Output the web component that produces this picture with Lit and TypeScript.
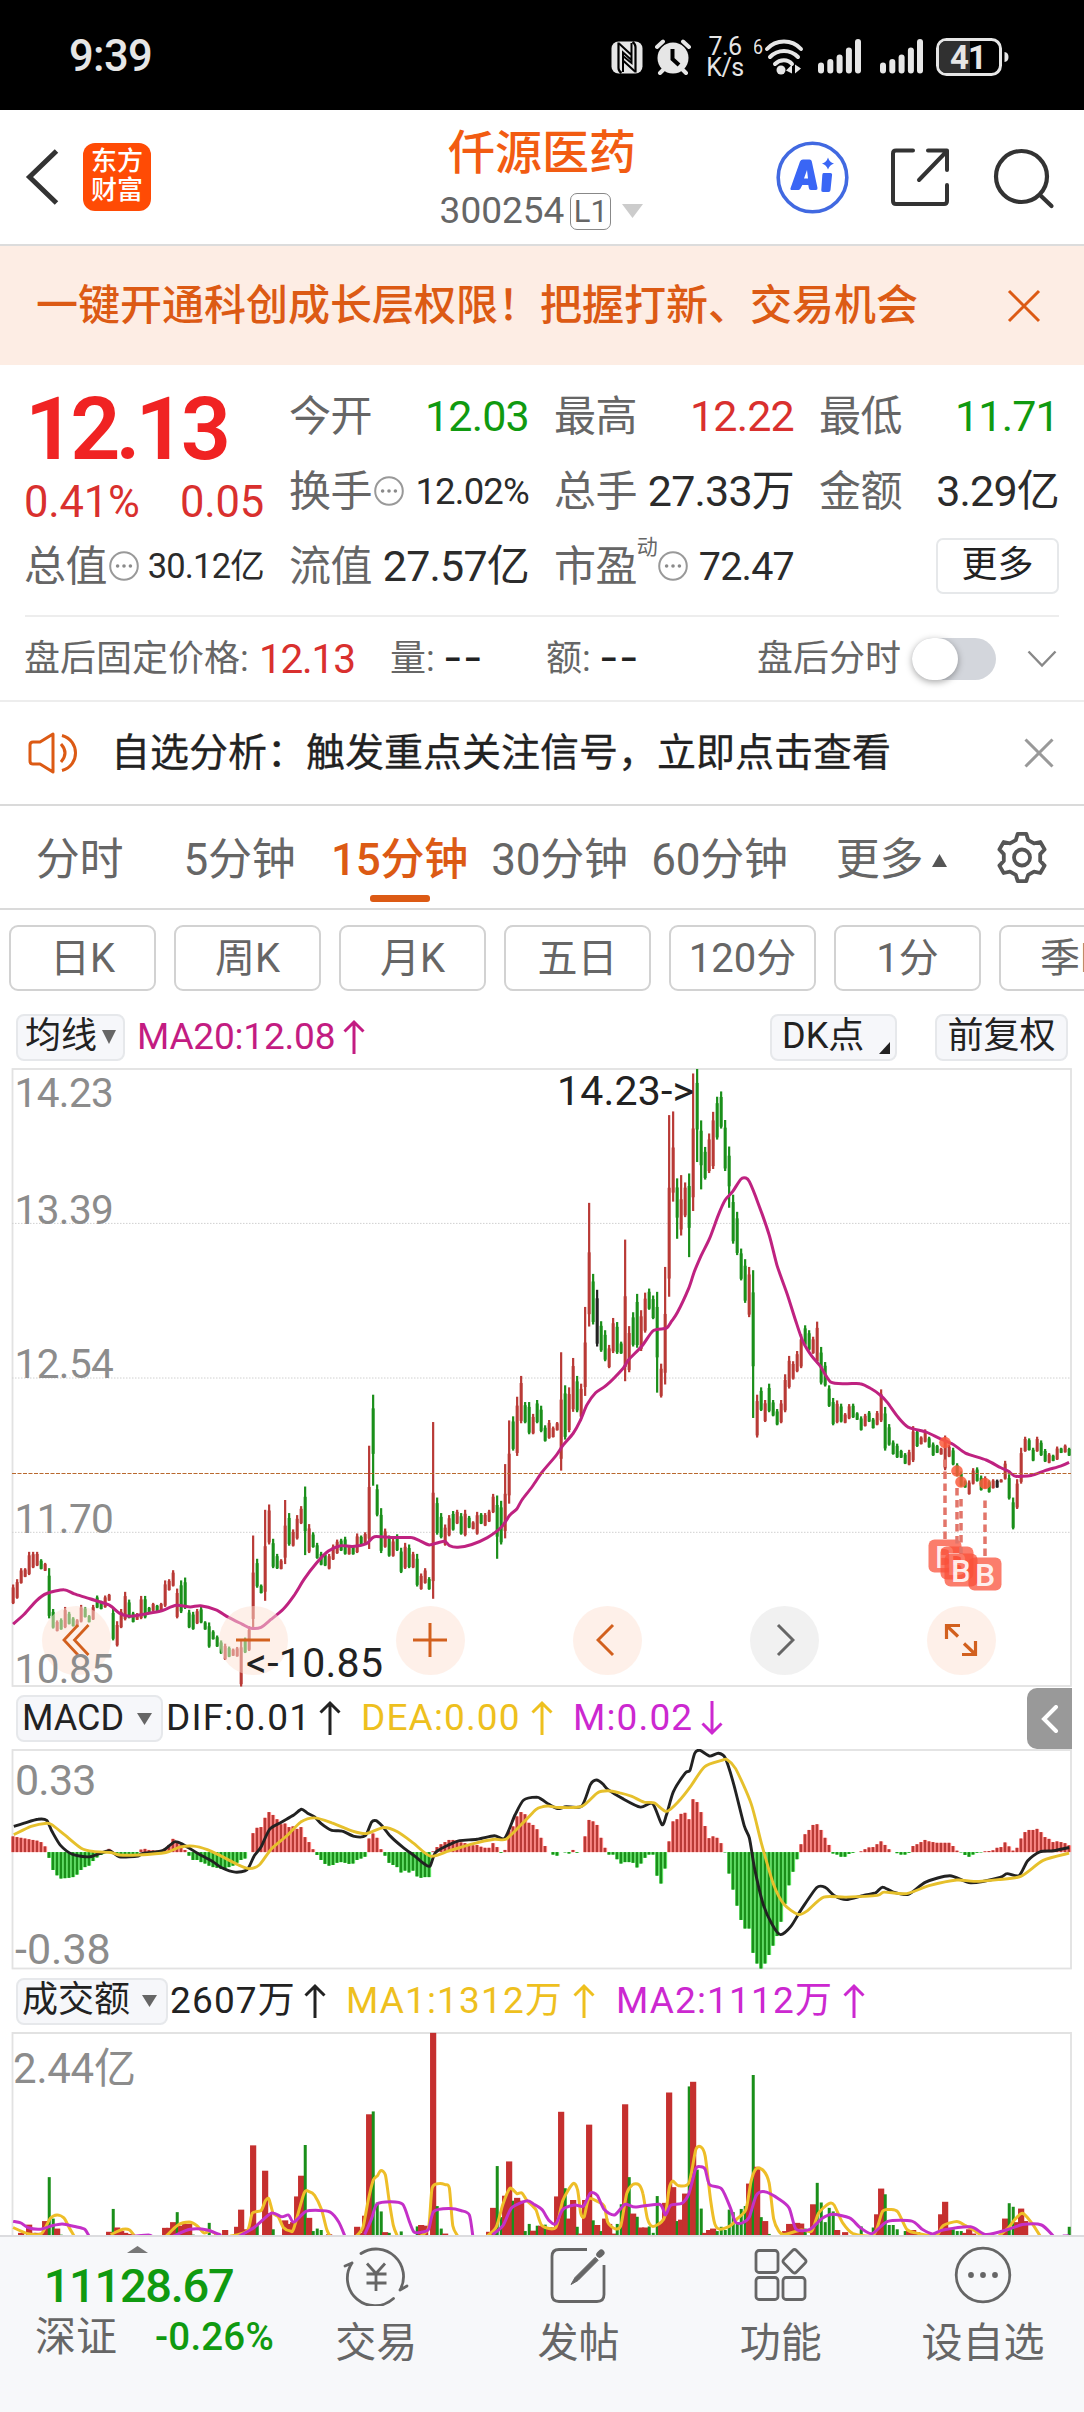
import { LitElement, html, svg, css, nothing } from "lit";
import { customElement, property } from "lit/decorators.js";
import { classMap } from "lit/directives/class-map.js";

/* ---------- series data ---------- */

// One candle per token: direction, high, low (plot units, 2.45 per pixel).
const CANDLES = `r1285-1333 r1272-1320 r1245-1283 r1245-1267 r1205-1262 r1205-1245 r1205-1240 g1223-1248 r1232-1252 g1245-1368
g1345-1393 r1373-1400 g1368-1396 r1340-1392 g1352-1383 g1365-1388 r1370-1390 r1335-1378 g1340-1366 g1360-1378
r1335-1372 g1312-1343 g1325-1346 r1312-1342 r1308-1325 g1343-1422 r1375-1437 r1345-1392 r1303-1373 g1322-1368
g1352-1378 r1355-1372 r1313-1370 g1313-1368 g1340-1355 r1330-1350 g1335-1350 r1330-1350 r1275-1340 r1272-1300
r1250-1290 r1295-1368 g1275-1355 g1268-1345 g1347-1392 g1352-1396 r1345-1382 g1340-1380 g1375-1396 g1378-1440
g1397-1420 g1410-1438 g1422-1455 r1430-1470 g1437-1463 r1442-1460 r1438-1462 r1422-1535 g1415-1453 r1387-1448
r1165-1392 g1222-1293 g1285-1307 r1102-1325 r1089-1187 g1173-1245 g1210-1247 r1223-1248 r1078-1235 g1110-1190
r1150-1192 r1115-1175 r1093-1137 g1045-1213 r1137-1208 g1157-1195 g1183-1222 g1205-1238 g1208-1240 r1210-1248
r1187-1225 r1175-1210 g1173-1203 g1168-1212 r1190-1212 g1190-1212 r1160-1208 g1165-1188 r1157-1187 r945-1198
g820-1043 g1040-1118 g1098-1208 r1148-1195 g1165-1217 r1173-1217 g1162-1203 g1195-1257 r1183-1247 g1187-1245
r1205-1245 g1210-1290 r1258-1298 r1245-1283 g1267-1298 r887-1320 g1072-1163 g1110-1172 r1138-1190 r1115-1167
g1105-1153 r1102-1137 g1110-1163 r1102-1167 g1117-1147 r1130-1150 r1107-1163 g1110-1137 r1110-1142 r1102-1132
r1063-1110 g1067-1222 g1080-1187 r990-1172 r883-1087 g873-957 r825-970 r774-890 g838-890 g838-917
r867-917 g833-890 g847-912 g895-935 r882-928 r898-925 r887-908 r716-1006 g797-930 r802-912
r730-862 g774-863 r793-878 r605-823 r350-653 g524-648 k563-702 g640-715 g662-738 r698-755
r632-718 g642-720 g690-720 r440-787 r652-765 g618-702 g573-705 r613-713 r570-668 g560-612
g577-635 g568-815 r744-827 r507-795 r135-580 r126-347 g290-438 r282-430 r300-385 g278-483
r33-370 g22-250 g148-317 g213-293 r180-277 r127-267 g90-195 g77-168 g147-272 g212-362
g330-450 g372-478 g462-540 g488-595 r507-630 g515-877 r820-925 g802-860 r833-887 g793-863
g833-873 g855-895 r833-890 r770-863 r725-805 r738-783 r713-765 r672-755 g650-700 g662-712
r678-720 r641-743 g703-795 g740-800 g797-850 g828-895 r834-890 g842-888 r865-890 r843-880
g842-877 g863-882 g873-908 r867-898 g860-887 g877-903 r860-895 r807-887 g850-957 g892-945
g932-967 g940-975 g955-975 g963-990 r955-993 r897-985 g905-948 r922-942 r905-937 g923-950
g937-970 g943-963 r950-967 r920-1005 r943-973 g950-993 g988-1020 g1008-1045 g1030-1048 r1030-1065
r1000-1040 g998-1033 g1018-1055 r1020-1050 g1030-1060 r1027-1050 k1028-1048 r1027-1035 r982-1028 g1015-1077
g1072-1150 r1027-1100 r950-1038 r923-960 g927-957 g950-983 r923-960 g932-970 g953-985 r963-988
g967-983 r947-980 g950-963 r942-962 g950-970`;

const MA20 = `38,1382 70,1358 105,1325 135,1307 185,1298 215,1308 260,1320 315,1335 345,1355 375,1363 420,1357 465,1350 510,1336 550,1340 580,1337 625,1347 660,1365 700,1382 725,1392 755,1390 785,1370 820,1345 850,1313 880,1272 915,1233 950,1203 985,1190 1020,1192 1060,1185 1083,1168 1130,1170 1190,1170 1215,1178 1242,1188 1285,1179 1300,1190 1325,1194 1365,1187 1410,1170 1450,1145 1475,1115 1495,1100 1510,1078 1540,1045 1568,1010 1608,970 1628,945 1658,915 1678,885 1698,845 1723,815 1753,798 1803,755 1818,735 1858,700 1890,663 1928,657 1943,640 1960,618 1993,558 2008,520 2028,480 2053,437 2078,380 2098,343 2120,322 2143,292 2158,289 2168,298 2193,350 2225,428 2248,503 2278,575 2303,642 2323,690 2348,725 2373,750 2403,789 2448,793 2488,793 2518,804 2548,822 2568,840 2598,875 2628,900 2678,911 2718,927 2758,942 2793,963 2853,980 2893,998 2918,1008 2938,1020 2983,1018 3023,1006 3068,995 3093,986`;

// MACD histogram, signed height per bar (2.8 units per pixel).
const HIST = `44 42 40 38 36 34 32 28 16 -16 -50 -65 -74 -73 -72 -70 -63 -50 -42 -38 -25 -15 -8 -3 9 -4 -8 -10 -8 -10 -10 -8 7 9 6 5 4 6 10 20 37 30 20 6 -10 -22 -22 -28 -32 -38 -42 -44 -47 -46 -42 -38 -30 -22 -18 0 53 68 70 96 112 104 92 78 80 70 72 65 70 42 28 8 -8 -22 -33 -38 -36 -30 -28 -30 -33 -32 -22 -18 -13 38 52 40 8 -10 -30 -36 -42 -57 -52 -57 -52 -68 -72 -70 -70 2 14 22 28 34 34 33 27 25 20 19 20 15 12 12 25 14 -2 6 60 72 100 112 106 82 76 64 40 17 0 -7 -10 0 -1 -4 6 -2 0 44 90 86 76 40 12 -7 -7 -20 -32 -28 -28 -30 -43 -32 -16 -7 -7 -66 -88 -46 30 86 92 107 110 92 148 140 112 73 39 44 40 25 -1 -60 -105 -150 -190 -214 -214 -282 -312 -326 -312 -288 -262 -235 -195 -145 -93 -55 -20 22 50 62 76 78 62 40 20 -4 -7 -13 -13 -5 -2 0 2 8 13 14 22 30 20 8 0 -3 -7 -7 -2 17 22 28 34 30 28 26 26 26 26 17 4 -1 -8 -13 -7 -2 -1 2 3 5 12 14 27 16 4 12 38 56 62 62 65 56 42 37 28 30 28 25 19`;

const DIF = `40,382 70,373 110,362 135,365 150,395 175,435 210,460 260,467 315,450 345,467 400,465 410,458 470,450 505,425 530,433 570,456 615,480 640,497 680,510 715,503 735,465 755,440 780,390 810,372 850,350 872,334 890,345 910,355 930,375 960,393 990,395 1025,410 1057,408 1075,370 1088,366 1105,380 1130,410 1165,440 1200,465 1225,485 1244,493 1260,455 1300,433 1330,422 1380,418 1430,408 1460,415 1490,350 1515,308 1553,300 1568,307 1588,320 1613,332 1638,327 1683,325 1708,265 1725,252 1743,262 1758,278 1803,305 1853,328 1888,318 1915,377 1928,350 1948,285 1983,232 1996,225 2010,177 2025,169 2053,185 2078,177 2098,190 2123,265 2153,380 2168,415 2183,500 2208,600 2233,655 2258,685 2288,662 2318,615 2363,553 2388,553 2413,575 2448,587 2498,575 2533,568 2553,552 2583,565 2628,572 2678,538 2748,520 2808,540 2893,525 2913,514 2948,520 2973,478 3008,453 3048,450 3093,441`;
const DEA = `40,405 90,382 135,373 150,377 190,408 235,443 270,452 320,455 345,462 400,462 480,455 520,440 560,437 600,447 640,465 690,490 720,500 750,490 785,445 830,408 870,370 910,358 960,372 1020,395 1060,402 1110,385 1150,397 1195,428 1245,465 1300,450 1370,430 1430,418 1465,417 1520,365 1550,335 1568,327 1588,325 1618,329 1683,326 1728,288 1758,282 1793,288 1828,298 1863,314 1893,316 1928,340 1963,312 1998,270 2038,215 2088,197 2103,195 2128,220 2173,318 2203,430 2238,545 2268,600 2308,628 2333,620 2383,580 2448,580 2538,575 2558,566 2623,570 2688,548 2768,532 2818,536 2888,531 2953,522 3018,477 3093,457`;

// Turnover bars: index, direction, top edge (2.8 units per pixel).
const TURNOVER = `2r1520 4r1497 5r1520 6r1520 8r1487 9g1364 10g1480 11r1508 12g1525 24r1517 25g1453 26r1505 27r1515 28r1520 29r1523 38r1506 39r1506 40r1490 41g1462 42r1500 43r1495 44r1495 45g1525 49g1492 51r1520 53r1512 56r1503 57r1455 58r1510 59r1510 60r1275 61g1495 63r1346 64r1465 65g1510 68r1485 69r1495 70r1490 71r1418 72r1360 73g1274 74r1478 75g1515 76g1508 77g1512 79r1524 86r1503 87r1520 88r1472 89r1188 90g1180 91g1435 92g1460 93r1518 94g1520 97g1516 101g1502 102r1498 103r1500 105r960 106g1445 107g1508 108r1522 119r1517 120r1450 121g1333 122g1476 123r1416 124r1320 125g1430 126r1422 127r1430 128g1515 129g1495 130r1514 131g1500 132r1500 133g1497 134r1505 135r1505 136r1418 137r1181 138g1395 139r1480 140r1428 141g1503 142r1522 143r1428 144r1217 145g1485 146r1498 147g1515 148r1480 149r1495 150r1522 151g1495 152g1440 153r1160 154g1364 155r1466 156g1475 157r1505 158r1505 159g1502 160g1520 161g1417 162r1490 163r1436 164r1127 165r1392 166g1487 167r1483 168r1410 169g1110 170r1097 171g1343 172g1452 173r1520 174r1512 175r1508 176g1515 177g1503 178g1512 179g1455 180g1462 181g1490 182g1453 183g1445 184r1382 185g1078 186r1335 187g1476 188r1487 189g1523 193r1515 194r1495 195r1495 196r1492 197r1494 198g1508 200r1440 201g1380 202g1435 203g1490 204g1450 205g1460 206r1512 208r1518 212g1502 215g1505 216r1468 217r1396 218g1412 219g1498 220g1498 221g1510 223g1515 224r1512 225r1512 226r1518 230r1522 232r1468 233r1433 234r1506 235g1510 236g1515 237g1515 238r1520 239r1510 240r1522 248r1480 249g1437 250g1447 251r1490 252r1452 253r1487 264g1503`;

const VOL_MA1 = `38,1505 80,1522 120,1522 145,1480 165,1470 185,1478 200,1505 215,1530|320,1525 355,1510 375,1512 390,1530|480,1530 515,1498 547,1490 570,1500 590,1520 610,1515 635,1530|665,1530 715,1515 730,1465 755,1458 768,1430 778,1425 790,1465 805,1475 820,1505 840,1515 850,1508 880,1408 895,1405 910,1415 930,1455 945,1510 955,1530|1030,1530 1050,1505 1065,1430 1080,1372 1092,1360 1102,1345 1115,1358 1125,1425 1138,1500 1150,1530|1215,1530 1240,1505 1250,1395 1270,1382 1288,1385 1300,1395 1310,1500 1325,1530|1408,1530 1435,1505 1455,1440 1475,1395 1495,1410 1510,1408 1525,1430 1550,1455 1568,1500 1608,1505 1628,1430 1658,1382 1671,1400 1680,1465 1690,1475 1703,1425 1728,1432 1748,1445 1758,1490 1778,1508 1796,1500 1813,1410 1830,1385 1848,1385 1860,1410 1873,1480 1888,1502 1913,1490 1925,1470 1936,1395 1946,1375 1963,1388 1993,1380 2013,1287 2028,1280 2040,1305 2056,1430 2068,1495 2083,1510 2113,1500 2133,1480 2158,1455 2173,1375 2188,1340 2208,1345 2225,1380 2238,1480 2253,1515 2268,1525 2318,1512 2348,1515 2368,1465 2398,1438 2413,1442 2438,1492 2468,1522 2528,1525 2553,1460 2578,1455 2598,1462 2623,1510 2648,1520 2708,1528 2728,1500 2768,1488 2793,1500 2813,1510 2843,1530|2888,1530 2918,1505 2938,1480 2958,1465 2983,1490 3010,1530`;
const VOL_MA2 = `38,1488 60,1492 80,1505 115,1510 150,1500 180,1495 220,1503 245,1510 258,1530|375,1530 430,1526 440,1530|500,1530 550,1510 600,1512 640,1527|690,1530 735,1505 785,1465 815,1475 835,1470 850,1490 885,1460 925,1457 955,1462 980,1490 998,1530|1055,1525 1075,1480 1090,1440 1130,1433 1165,1440 1185,1490 1198,1518 1220,1518 1240,1510 1255,1460 1300,1452 1335,1458 1358,1470 1368,1530|1425,1525 1455,1500 1480,1450 1525,1430 1545,1440 1568,1455 1588,1485 1608,1495 1628,1455 1663,1442 1688,1445 1708,1408 1728,1415 1748,1455 1778,1470 1808,1440 1838,1448 1908,1440 1925,1470 1940,1443 1973,1437 1993,1410 2013,1340 2028,1335 2040,1342 2053,1385 2088,1397 2113,1450 2128,1490 2148,1492 2168,1475 2188,1415 2213,1405 2253,1425 2283,1450 2303,1510 2343,1510 2378,1480 2408,1468 2458,1478 2488,1505 2523,1522 2568,1488 2638,1487 2668,1510 2698,1523 2728,1512 2808,1503 2853,1525 2918,1510 2958,1497 3013,1498 3048,1530|3075,1529 3093,1528`;

/* ---------- plotting helpers ---------- */

const X_UNIT = 2.893;
const barX = (i: number) => 13.14 + i * 4;

function smoothPath(points: string, scaleY: number, shiftY: number): string {
  return points
    .split("|")
    .map((run) => {
      const p = run
        .trim()
        .split(/\s+/)
        .map((s) => s.split(",").map(Number))
        .map(([x, y]) => [x / X_UNIT, y / scaleY + shiftY]);
      let d = `M${p[0][0].toFixed(1)} ${p[0][1].toFixed(1)}`;
      for (let i = 0; i < p.length - 1; i++) {
        const a = p[Math.max(i - 1, 0)];
        const b = p[i];
        const c = p[i + 1];
        const e = p[Math.min(i + 2, p.length - 1)];
        const t = 8;
        d += `C${[
          b[0] + (c[0] - a[0]) / t,
          b[1] + (c[1] - a[1]) / t,
          c[0] - (e[0] - b[0]) / t,
          c[1] - (e[1] - b[1]) / t,
          c[0],
          c[1],
        ]
          .map((v) => v.toFixed(1))
          .join(" ")}`;
      }
      return d;
    })
    .join("");
}

const RED = "#b93a36";
const GREEN = "#1a8f1a";

/* ---------- icons ---------- */

const iconMore = html`<svg width="30" height="30" viewBox="0 0 30 30" fill="none">
  <circle cx="15" cy="15" r="13.8" stroke="#999" stroke-width="2" />
  <circle cx="8.6" cy="15" r="1.8" fill="#8a8a8a" /><circle cx="15" cy="15" r="1.8" fill="#8a8a8a" /><circle cx="21.4" cy="15" r="1.8" fill="#8a8a8a" />
</svg>`;

const arrow = (up: boolean) => html`<svg width="22" height="36" viewBox="0 0 22 36" fill="none" stroke="currentColor" stroke-width="3">
  ${up ? svg`<path d="M11 35V3M1.5 12.5L11 3l9.5 9.5" />` : svg`<path d="M11 1v32M1.5 23.5L11 33l9.5-9.5" />`}
</svg>`;

const down = (w: number, h: number, c: string) =>
  html`<svg width=${w} height=${h} viewBox="0 0 10 10" preserveAspectRatio="none"><path d="M0 0h10L5 10z" fill=${c} /></svg>`;
const upTri = (w: number, h: number, c: string) =>
  html`<svg width=${w} height=${h} viewBox="0 0 10 10" preserveAspectRatio="none"><path d="M0 10h10L5 0z" fill=${c} /></svg>`;

const base = css`
  :host {
    display: block;
    font-family: Roboto, "Noto Sans CJK SC", sans-serif;
    color: #222;
  }
  * {
    box-sizing: border-box;
  }
  svg {
    display: block;
    flex: none;
  }
`;

/* ---------- status bar ---------- */

@customElement("status-bar")
class StatusBar extends LitElement {
  static styles = [
    base,
    css`
      .bar {
        height: 110px;
        background: #000;
        color: #e6e6e6;
        display: flex;
        align-items: center;
        padding: 4px 74px 0 69px;
      }
      .time {
        font-size: 43.500px;
        font-weight: 500;
        flex: 1;
        letter-spacing: -0.600px;
      }
      .speed {
        font-size: 25px;
        line-height: 21px;
        text-align: center;
        width: 38px;
        margin: 0 10px 0 15px;
        letter-spacing: -0.500px;
        padding-bottom: 1px;
      }
      .gap {
        margin-left: 12px;
      }
    `,
  ];
  private signal() {
    return html`<svg width="44" height="36" viewBox="0 0 44 36" fill="#e6e6e6">
      <rect x="0" y="23.500" width="6" height="11" rx="3" /><rect x="9.300" y="20" width="6" height="14.500" rx="3" /><rect x="18.600" y="15.500" width="6" height="19" rx="3" /><rect x="27.900" y="8.500" width="6" height="26" rx="3" /><rect x="37" y="0" width="6" height="34.500" rx="3" />
    </svg>`;
  }
  render() {
    return html`<div class="bar">
      <span class="time">9:39</span>
      <svg width="32" height="33" viewBox="0 0 32 33">
        <rect x="0.500" y="0.500" width="31" height="32" rx="7" fill="#e6e6e6" />
        <path d="M7.500 1.500V27q0 3 3 5M24.500 31.500V6q0-3-3-5" stroke="#000" stroke-width="2.200" fill="none" />
        <path d="M8 2.500L20.500 14v5L12 11.500V31M24 30.500L12 19.500v-4.500l8.500 7V2" stroke="#000" stroke-width="2" fill="none" />
      </svg>
      <svg class="gap" width="36" height="36" viewBox="0 0 36 36" fill="none" stroke="#e6e6e6">
        <circle cx="18" cy="19" r="15.500" fill="#e6e6e6" stroke="none" />
        <path d="M2 8l6-5.500M34 8l-6-5.500M5 34l4-4M31 34l-4-4" stroke-width="4" stroke-linecap="round" />
        <path d="M17.500 10v10l6.500 6" stroke="#000" stroke-width="4" />
      </svg>
      <div class="speed">7.6<br />K/s</div>
      <svg width="50" height="38" viewBox="0 0 50 38" fill="none" stroke="#e6e6e6" stroke-linecap="round">
        <text x="-1" y="16" fill="#e6e6e6" stroke="none" font-size="21" textLength="10" lengthAdjust="spacingAndGlyphs">6</text>
        <path d="M13 11C22 1 38 1 47 11M16 19c8-8 20-8 28 0M21 26c5-5 13-5 17 0" stroke-width="4" />
        <circle cx="27" cy="32" r="4.500" fill="#e6e6e6" stroke="none" />
        <path d="M38 26.500v9l-6-3zM41 35.500v-9l6 4z" fill="#e6e6e6" stroke="none" />
      </svg>
      <span style="width:14px"></span>
      ${this.signal()}<span style="width:18px"></span>${this.signal()}
      <svg class="gap" width="74" height="38" viewBox="0 0 74 38">
        <rect x="1.500" y="1.500" width="63" height="35" rx="9" fill="#000" stroke="#e6e6e6" stroke-width="3" />
        <path d="M10 3h24v32H10a7 7 0 0 1-7-7V10a7 7 0 0 1 7-7z" fill="#303030" />
        <text x="14" y="30.500" font-size="33" font-weight="700" fill="#e6e6e6" letter-spacing="-1">41</text>
        <path d="M68.500 14a4.500 5 0 0 1 4 5 4.500 5 0 0 1-4 5z" fill="#e6e6e6" />
      </svg>
    </div>`;
  }
}

/* ---------- title bar ---------- */

@customElement("title-bar")
class TitleBar extends LitElement {
  static styles = [
    base,
    css`
      .bar {
        height: 136px;
        background: #fff;
        display: grid;
        grid-template-columns: 300px 1fr 308px;
        border-bottom: 2px solid #dcdcdc;
      }
      .left,
      .right {
        display: flex;
        align-items: center;
      }
      .left {
        padding-left: 25px;
        gap: 24px;
      }
      .logo {
        width: 68px;
        height: 68px;
        border-radius: 12px;
        background: #ff4b05;
        color: #fff;
        font-size: 26px;
        line-height: 29px;
        font-weight: 500;
        display: grid;
        align-content: center;
        justify-content: center;
        padding-bottom: 2px;
      }
      .mid {
        display: flex;
        flex-direction: column;
        align-items: center;
        padding-left: 8px;
      }
      .name {
        font-size: 47px;
        line-height: 56px;
        margin-top: 15px;
        font-weight: 500;
        color: #f25c12;
      }
      .code {
        display: flex;
        align-items: center;
        font-size: 37px;
        line-height: 40px;
        color: #666;
        padding-right: 1px;
        margin-top: 10px;
      }
      .level {
        border: 1.500px solid #888;
        border-radius: 7px;
        height: 37px;
        line-height: 35px;
        width: 41px;
        text-align: center;
        font-size: 31px;
        margin: 0 11px 0 6px;
      }
      .right {
        gap: 42px;
      }
      .find {
        margin: 4px 0 0 2px;
      }
    `,
  ];
  render() {
    return html`<div class="bar">
      <div class="left">
        <svg width="34" height="56" viewBox="0 0 34 56" fill="none" stroke="#333" stroke-width="5"><path d="M31.500 2L4.500 28l27 26" /></svg>
        <div class="logo"><span>东方</span><span>财富</span></div>
      </div>
      <div class="mid">
        <div class="name">仟源医药</div>
        <div class="code">300254<span class="level">L1</span>${down(21, 14, "#ccc")}</div>
      </div>
      <div class="right">
        <svg width="73" height="73" viewBox="0 0 73 73" fill="#3a66f5">
          <circle cx="36.500" cy="36.500" r="34.300" fill="none" stroke="#4169e1" stroke-width="3.600" />
          <path fill-rule="evenodd" d="M24 20.500q.8-2 3-2h6.500q2 0 2.300 2L41.500 47q.3 2-1.600 2h-5q-1.800 0-2-1.800L32.300 44h-6l-1.800 3.600q-.6 1.400-2 1.400H16q-2.200 0-1.400-2zM31 29l-3 8.500h4z" />
          <path d="M47.500 32h7q1.700 0 1.600 1.600L54.500 49q-.2 2-2 2H47q-2 0-1.700-2l1-15q.1-2 1.200-2zM52 16.500q1.500 5 6 6-4.500 1.500-6 6-1.500-4.500-6-6 4.500-1 6-6z" />
        </svg>
        <svg width="58" height="58" viewBox="0 0 58 58" fill="none" stroke="#333" stroke-width="4" stroke-linecap="round" stroke-linejoin="round">
          <path d="M22 2.500H5q-3 0-3 3V53q0 3 3 3h48q3 0 3-3V37M37 2.500h19V22M55 4L28 32" />
        </svg>
        <svg class="find" width="62" height="62" viewBox="0 0 62 62" fill="none" stroke="#333" stroke-width="4.200" stroke-linecap="round">
          <circle cx="28.500" cy="28.500" r="25.500" /><path d="M47 47l11.500 11" />
        </svg>
      </div>
    </div>`;
  }
}

/* ---------- quote panel ---------- */

@customElement("quote-cell")
class QuoteCell extends LitElement {
  @property() label = "";
  @property() value = "";
  @property() tone = "";
  @property() sup = "";
  @property({ type: Boolean }) hint = false;
  static styles = [
    base,
    css`
      .cell {
        height: 75px;
        display: flex;
        align-items: center;
        justify-content: space-between;
        white-space: nowrap;
      }
      .label {
        font-size: 42px;
        color: #666;
        display: flex;
        align-items: center;
        letter-spacing: -0.600px;
        margin-left: -1px;
        padding-top: 2px;
      }
      .label svg {
        margin: -3px 0 0 2px;
      }
      .sup {
        font-size: 21px;
        align-self: flex-start;
        margin: -5px -1px 0 0;
        line-height: 21px;
      }
      .value {
        font-size: 43px;
        color: #2b2b2b;
        letter-spacing: -0.800px;
        padding-top: 1px;
      }
      .small {
        font-size: 36.500px;
      }
      .tight {
        font-size: 34.500px;
      }
      .mid {
        font-size: 39.500px;
      }
      .up {
        color: #d9302e;
      }
      .down {
        color: #109a10;
      }
    `,
  ];
  render() {
    const cls = {
      value: true,
      small: this.hint && !this.sup,
      tight: this.hint && this.value.endsWith("亿"),
      mid: !!this.sup,
      up: this.tone === "up",
      down: this.tone === "down",
    };
    return html`<div class="cell">
      <span class="label">${this.label}${this.sup ? html`<span class="sup">${this.sup}</span>` : nothing}${this.hint ? iconMore : nothing}</span>
      <span class=${classMap(cls)}>${this.value}</span>
    </div>`;
  }
}

@customElement("quote-panel")
class QuotePanel extends LitElement {
  static styles = [
    base,
    css`
      .banner {
        height: 119px;
        background: #fdede4;
        color: #dc5a14;
        font-size: 42px;
        font-weight: 500;
        display: flex;
        align-items: center;
        justify-content: space-between;
        padding: 2px 43px 0 36px;
      }
      .banner svg {
        margin-top: -2px;
      }
      .panel {
        display: grid;
        grid-template-columns: repeat(4, 239px);
        column-gap: 26px;
        padding: 14px 25px 11px;
        background: #fff;
      }
      .lead {
        grid-row: span 2;
        height: 150px;
      }
      .price {
        font-size: 88px;
        line-height: 90px;
        font-weight: 600;
        color: #f02323;
        letter-spacing: -5px;
        padding: 5px 0 0;
      }
      .change {
        display: flex;
        justify-content: space-between;
        font-size: 43.500px;
        line-height: 60px;
        color: #d9302e;
        letter-spacing: -0.200px;
        margin: -1px 0 0 -1px;
      }
      .more {
        justify-self: end;
        align-self: center;
        width: 123px;
        height: 56px;
        border: 2px solid #e6e8ea;
        border-radius: 7px;
        text-align: center;
        font-size: 36px;
        line-height: 51px;
        margin-top: -2px;
      }
      .after {
        margin: 0 25px;
        border-top: 2px solid #ededed;
        height: 85px;
        display: flex;
        align-items: center;
        font-size: 36px;
        color: #666;
        white-space: nowrap;
      }
      .after span {
        padding-top: 2px;
        margin-left: -1px;
      }
      .after b {
        display: inline-block;
        font-weight: 500;
        color: #222;
        transform: scaleX(1.45);
        transform-origin: 0 50%;
        letter-spacing: 1.500px;
      }
      .after .fixed {
        color: #d9302e;
        font-size: 40.500px;
        letter-spacing: -1.200px;
      }
      .w1 {
        width: 236px;
      }
      .w2 {
        width: 132px;
      }
      .w3 {
        width: 157px;
      }
      .w4 {
        width: 212px;
      }
      .spring {
        flex: 1;
      }
      .switch {
        width: 84px;
        height: 42px;
        border-radius: 21px;
        background: #d3d6dc;
        margin-right: 31px;
        display: flex;
      }
      .knob {
        width: 46px;
        height: 42px;
        border-radius: 21px;
        background: #fff;
        box-shadow: 0 2px 7px rgba(0, 0, 0, 0.35);
      }
      .drop {
        margin-right: 2px;
      }
      .notice {
        height: 106px;
        border-top: 2px solid #ededed;
        border-bottom: 2px solid #dadada;
        display: flex;
        align-items: center;
        font-size: 39px;
        padding: 0 30px 0 28px;
        color: #222;
      }
      .notice .msg {
        flex: 1;
        padding-left: 31px;
        -webkit-text-stroke: 0.300px #222;
      }
    `,
  ];
  render() {
    return html`
      <div class="banner">
        <span>一键开通科创成长层权限！把握打新、交易机会</span>
        <svg width="34" height="34" viewBox="0 0 34 34" stroke="#dc5a14" stroke-width="3"><path d="M2 2l30 30M32 2L2 32" /></svg>
      </div>
      <div class="panel">
        <div class="lead">
          <div class="price">12.13</div>
          <div class="change"><span>0.41%</span><span>0.05</span></div>
        </div>
        <quote-cell label="今开" value="12.03" tone="down"></quote-cell>
        <quote-cell label="最高" value="12.22" tone="up"></quote-cell>
        <quote-cell label="最低" value="11.71" tone="down"></quote-cell>
        <quote-cell label="换手" value="12.02%" hint></quote-cell>
        <quote-cell label="总手" value="27.33万"></quote-cell>
        <quote-cell label="金额" value="3.29亿"></quote-cell>
        <quote-cell label="总值" value="30.12亿" hint></quote-cell>
        <quote-cell label="流值" value="27.57亿"></quote-cell>
        <quote-cell label="市盈" value="72.47" sup="动" hint></quote-cell>
        <div class="more">更多</div>
      </div>
      <div class="after">
        <span class="w1">盘后固定价格: </span><span class="w2 fixed">12.13</span>
        <span class="w3">量: <b>--</b></span><span class="w4">额: <b>--</b></span>
        <span>盘后分时</span>
        <span class="spring"></span>
        <div class="switch"><div class="knob"></div></div>
        <svg class="drop" width="30" height="18" viewBox="0 0 30 18" fill="none" stroke="#888" stroke-width="2.400"><path d="M1.500 1.500L15 15.500l13.500-14" /></svg>
      </div>
      <div class="notice">
        <svg width="52" height="42" viewBox="0 0 52 42" fill="none" stroke="#dc5a14" stroke-width="3">
          <path d="M25 2v38L12 32H5q-3 0-3-3V13q0-3 3-3h7zM33 12q8 9 0 18M34 3.500c18 5 18 30 0 35" stroke-linejoin="round" />
        </svg>
        <span class="msg">自选分析：触发重点关注信号，立即点击查看</span>
        <svg width="30" height="30" viewBox="0 0 30 30" stroke="#999" stroke-width="3"><path d="M1.500 1.500l27 27M28.500 1.500l-27 27" /></svg>
      </div>
    `;
  }
}

/* ---------- period tabs ---------- */

@customElement("period-tabs")
class PeriodTabs extends LitElement {
  static styles = [
    base,
    css`
      .tabs {
        height: 104px;
        display: grid;
        grid-template-columns: repeat(6, 160px) 1fr;
        border-bottom: 2px solid #dadada;
        font-size: 44px;
        color: #666;
        text-align: center;
      }
      .tab {
        display: flex;
        flex-direction: column;
        align-items: center;
        justify-content: flex-end;
        line-height: 60px;
        white-space: nowrap;
        letter-spacing: -0.200px;
        margin-left: -1px;
      }
      .line {
        width: 60px;
        height: 7px;
        border-radius: 3px;
        margin: 5px 0 6px;
      }
      .active {
        color: #dc5a14;
        font-weight: 500;
      }
      .active .line {
        background: #dc5a14;
      }
      .with-tri {
        display: flex;
        align-items: center;
        gap: 9px;
        padding-left: 24px;
      }
      .gear {
        display: flex;
        align-items: center;
        justify-content: center;
      }
      .chips {
        height: 90px;
        padding: 15px 0 0 9px;
        display: flex;
        gap: 18px;
        overflow: hidden;
      }
      .chip {
        flex: none;
        width: 147px;
        height: 66px;
        border: 2px solid #d2d2d2;
        border-radius: 9px;
        font-size: 40px;
        line-height: 64px;
        text-align: center;
        color: #666;
        white-space: nowrap;
      }
    `,
  ];
  render() {
    const teeth = Array.from({ length: 6 }, (_, i) => {
      const a = (i * Math.PI) / 3 - Math.PI / 2;
      const p = (r: number, o: number) => `${(25 + r * Math.cos(a + o)).toFixed(1)},${(25.5 + r * Math.sin(a + o)).toFixed(1)}`;
      return `${p(18.5, -0.34)} ${p(24, -0.18)} ${p(24, 0.18)} ${p(18.5, 0.34)}`;
    }).join(" ");
    return html`
      <div class="tabs">
        ${["分时", "5分钟", "15分钟", "30分钟", "60分钟"].map(
          (t) => html`<div class=${classMap({ tab: true, active: t === "15分钟" })}>${t}<span class="line"></span></div>`,
        )}
        <div class="tab"><span class="with-tri">更多${upTri(15, 13, "#555")}</span><span class="line"></span></div>
        <div class="gear">
          <svg width="50" height="51" viewBox="0 0 50 51" fill="none" stroke="#555" stroke-width="3.800" stroke-linejoin="round">
            <polygon points=${teeth} /><circle cx="25" cy="25.500" r="8" />
          </svg>
        </div>
      </div>
      <div class="chips">${["日K", "周K", "月K", "五日", "120分", "1分", "季K"].map((t) => html`<div class="chip">${t}</div>`)}</div>
    `;
  }
}

/* ---------- charts ---------- */

const chartBase = css`
  .head {
    display: flex;
    align-items: center;
    font-size: 37px;
    white-space: nowrap;
  }
  .pick {
    height: 47px;
    border: 2px solid #e6e8eb;
    border-radius: 8px;
    background: #f6f7fa;
    display: flex;
    align-items: center;
    justify-content: space-between;
    font-size: 36px;
    color: #222;
    flex: none;
  }
  .item {
    display: flex;
    align-items: center;
  }
  .txt {
    flex: 1;
  }
  .wide {
    letter-spacing: 1.150px;
  }
  .yellow {
    color: #eec01e;
  }
  .violet {
    color: #cc28d0;
  }
  .magenta {
    color: #c31c82;
  }
`;

@customElement("price-chart")
class PriceChart extends LitElement {
  static styles = [
    base,
    chartBase,
    css`
      .head {
        height: 68px;
        padding: 6px 16px 0;
      }
      .avg {
        width: 109px;
        padding: 0 7px 0;
      }
      .ma {
        width: 228px;
        margin-left: 12px;
        letter-spacing: -0.200px;
      }
      .dk {
        width: 127px;
        margin-left: auto;
        padding: 0 5px 0 10px;
      }
      .dk svg {
        align-self: flex-end;
        margin-bottom: 5px;
      }
      .fq {
        width: 133px;
        margin-left: 38px;
        justify-content: center;
      }
      .plot {
        position: relative;
        height: 620px;
      }
      .tools {
        position: absolute;
        left: 42px;
        top: 538px;
        display: flex;
        gap: 108.200px;
      }
      .tool {
        width: 68.800px;
        height: 68.800px;
        border-radius: 50%;
        background: rgba(254, 226, 212, 0.5);
        display: grid;
        place-items: center;
      }
      .off {
        background: rgba(228, 228, 228, 0.5);
      }
      .notes {
        position: absolute;
        left: 0;
        top: 0;
      }
    `,
  ];

  private candles() {
    return CANDLES.trim()
      .split(/\s+/)
      .map((t, i) => {
        const [hi, lo] = t.slice(1).split("-").map((v) => Number(v) / 2.45 - 8);
        const fill = t[0] === "r" ? RED : t[0] === "g" ? GREEN : "#222";
        const h = lo - hi;
        const long = h > 60;
        const top = hi + h * (long && t[0] === "r" ? 0.4 : 0.15);
        const x = barX(i);
        return svg`<rect x=${x - 1.1} y=${hi} width="2.2" height=${h} fill=${fill} /><rect x=${x - 1.5} y=${top} width="3" height=${h * (long ? 0.5 : 0.8)} fill=${fill} />`;
      });
  }

  private mark(x: number, dot: number, badge: number) {
    return svg`<g>
      <circle cx=${x} cy=${dot} r="5.8" fill="#fa5a3c" opacity=".85" />
      <path d="M${x} ${dot + 17}V${badge - 16}" stroke="#e2756a" stroke-width="3.5" stroke-dasharray="7.500 4.500" />
      <rect x=${x - 16.5} y=${badge - 16.5} width="33" height="33" rx="6" fill="#fa5038" opacity=".74" />
      <text x=${x} y=${badge + 11.5} font-size="32" font-weight="500" fill="#fff" fill-opacity=".9" text-anchor="middle">B</text>
    </g>`;
  }

  render() {
    const labels: [string, number][] = [["14.23", 39], ["13.39", 156], ["12.54", 309.5], ["11.70", 464.5], ["10.85", 614.5]];
    return html`
      <div class="head">
        <div class="pick avg">均线${down(14, 14, "#666")}</div>
        <div class="item ma magenta"><span class="txt">MA20:12.08</span>${arrow(true)}</div>
        <div class="pick dk">DK点<svg width="11" height="12" viewBox="0 0 11 12"><path d="M11 0v12H0z" fill="#222" /></svg></div>
        <div class="pick fq">前复权</div>
      </div>
      <div class="plot">
        <svg width="1084" height="620" viewBox="0 0 1084 620">
          <rect x="12.500" y="1" width="1058.500" height="617" fill="none" stroke="#e2e2e2" stroke-width="1.800" />
          ${[155.4, 310, 464.3].map((y) => svg`<path d="M12 ${y}H1071" stroke="#d0d0d0" stroke-width="1" stroke-dasharray="1.500 1.500" />`)}
          ${this.candles()}
          <path d=${smoothPath(MA20, 2.45, -8)} fill="none" stroke="#bf2280" stroke-width="3" stroke-linejoin="round" />
          <path d="M12 405.500H1071" stroke="#b9692e" stroke-width="1.200" stroke-dasharray="4 1.500" />
          ${this.mark(945, 374.5, 488)}${this.mark(957, 403, 495)}${this.mark(961, 414, 502)}${this.mark(985, 415.5, 506)}
        </svg>
        <div class="tools">
          <div class="tool"><svg width="28" height="32" viewBox="0 0 28 32" fill="none" stroke="#d2601e" stroke-width="2.800"><path d="M16 1L2 16l14 15M26.500 1L12.500 16l14 15" /></svg></div>
          <div class="tool"><svg width="34" height="4" viewBox="0 0 34 4"><rect width="34" height="3" y=".5" fill="#d2601e" /></svg></div>
          <div class="tool"><svg width="34" height="34" viewBox="0 0 34 34" stroke="#d2601e" stroke-width="3"><path d="M0 17h34M17 0v34" /></svg></div>
          <div class="tool"><svg width="22" height="34" viewBox="0 0 22 34" fill="none" stroke="#d2601e" stroke-width="3"><path d="M17 2L2 17l15 15" /></svg></div>
          <div class="tool off"><svg width="22" height="34" viewBox="0 0 22 34" fill="none" stroke="#666" stroke-width="3"><path d="M5 2l15 15L5 32" /></svg></div>
          <div class="tool"><svg width="36" height="36" viewBox="0 0 36 36" fill="none" stroke="#d2601e" stroke-width="3.200"><path d="M3.500 17V3.500H17M3.500 3.500L15 14.500M32.500 19v13.500H19M32.500 32.500L21 21.500" /></svg></div>
        </div>
        <svg class="notes" width="1084" height="620" viewBox="0 0 1084 620">
          ${labels.map(([t, y]) => svg`<text x="14.500" y=${y} font-size="40.500" letter-spacing="-0.600" fill="#8c8c8c">${t}</text>`)}
          <text x="557" y="37" font-size="41" fill="#222" textLength="137">14.23-&gt;</text>
          <text x="246" y="609" font-size="41" fill="#222" textLength="137">&lt;-10.85</text>
        </svg>
      </div>
    `;
  }
}

@customElement("macd-chart")
class MacdChart extends LitElement {
  static styles = [
    base,
    chartBase,
    css`
      .head {
        height: 61px;
        padding: 0 12px 0 16px;
      }
      .pick {
        width: 147px;
        padding: 0 9px 0 4px;
      }
      .dif {
        width: 175px;
        margin-left: 3px;
      }
      .dea {
        width: 192px;
        margin-left: 20px;
      }
      .m {
        width: 150px;
        margin-left: 20px;
      }
      .fold {
        margin-left: auto;
        width: 45px;
        height: 61px;
        border-radius: 10px 0 0 10px;
        background: #999;
        display: grid;
        place-items: center;
      }
    `,
  ];
  render() {
    const zero = 103.1;
    const bars = HIST.split(" ").map((s, i) => {
      const h = Number(s) / 2.8;
      const y = h > 0 ? zero - h : zero;
      const a = Math.abs(h);
      return svg`<rect x=${barX(i) - 2} y=${y} width="4" height=${a} fill=${h > 0 ? "#ff8a88" : "#5fe065"} /><rect x=${barX(i) - 1.4} y=${y} width="2.3" height=${a} fill=${h > 0 ? RED : GREEN} />`;
    });
    return html`
      <div class="head">
        <div class="pick">MACD${down(15, 12, "#666")}</div>
        <div class="item dif wide"><span class="txt">DIF:0.01</span>${arrow(true)}</div>
        <div class="item dea wide yellow"><span class="txt">DEA:0.00</span>${arrow(true)}</div>
        <div class="item m wide violet"><span class="txt">M:0.02</span>${arrow(false)}</div>
        <div class="fold"><svg width="18" height="28" viewBox="0 0 18 28" fill="none" stroke="#fff" stroke-width="4" stroke-linecap="round"><path d="M15 2L3 14l12 12" /></svg></div>
      </div>
      <svg width="1084" height="221" viewBox="0 0 1084 221">
        <rect x="12.500" y="1" width="1058.500" height="218.500" fill="none" stroke="#e2e2e2" stroke-width="1.800" />
        <text x="15" y="46" font-size="43" letter-spacing="-0.800" fill="#8c8c8c">0.33</text>
        <text x="15" y="215" font-size="43" fill="#8c8c8c">-0.38</text>
        ${bars}
        <path d=${smoothPath(DIF, 2.8, -59)} fill="none" stroke="#222" stroke-width="2.900" stroke-linejoin="round" />
        <path d=${smoothPath(DEA, 2.8, -59)} fill="none" stroke="#e6c02c" stroke-width="2.900" stroke-linejoin="round" />
      </svg>
    `;
  }
}

@customElement("turnover-chart")
class TurnoverChart extends LitElement {
  static styles = [
    base,
    chartBase,
    css`
      .head {
        height: 62px;
        padding: 0 12px 0 16px;
      }
      .pick {
        width: 152px;
        padding: 0 9px 0 4px;
      }
      .now {
        width: 156px;
        margin-left: 2px;
      }
      .ma1 {
        width: 249px;
        margin-left: 20px;
      }
      .ma2 {
        width: 249px;
        margin-left: 21px;
      }
    `,
  ];
  render() {
    const bars = TURNOVER.split(" ").map((t) => {
      const m = /^(\d+)([rg])(\d+)$/.exec(t)!;
      const x = barX(Number(m[1]));
      const y = Number(m[3]) / 2.8 - 342;
      return m[2] === "r"
        ? svg`<rect x=${x - 3.1} y=${y} width="6.2" height=${204 - y} fill="#c5302f" />`
        : svg`<rect x=${x - 1.4} y=${y} width="3" height=${204 - y} fill=${GREEN} />`;
    });
    return html`
      <div class="head">
        <div class="pick">成交额${down(15, 12, "#666")}</div>
        <div class="item now wide"><span class="txt">2607万</span>${arrow(true)}</div>
        <div class="item ma1 wide yellow"><span class="txt">MA1:1312万</span>${arrow(true)}</div>
        <div class="item ma2 wide violet"><span class="txt">MA2:1112万</span>${arrow(true)}</div>
      </div>
      <svg width="1084" height="203" viewBox="0 0 1084 203">
        <path d="M12.500 204V1H1071V204" fill="none" stroke="#e2e2e2" stroke-width="1.800" />
        <text x="13" y="51" font-size="42" fill="#8c8c8c" textLength="123">2.44亿</text>
        ${bars}
        <path d=${smoothPath(VOL_MA1, 2.8, -342)} fill="none" stroke="#eebe28" stroke-width="3" stroke-linejoin="round" />
        <path d=${smoothPath(VOL_MA2, 2.8, -342)} fill="none" stroke="#c430c8" stroke-width="3" stroke-linejoin="round" />
      </svg>
    `;
  }
}

/* ---------- bottom bar ---------- */

@customElement("bottom-bar")
class BottomBar extends LitElement {
  static styles = [
    base,
    css`
      .bar {
        height: 177px;
        background: #f7f8fa;
        border-top: 2px solid #dcdcdf;
        display: grid;
        grid-template-columns: 275px repeat(4, 202.300px);
      }
      .index {
        display: flex;
        flex-direction: column;
        align-items: center;
        padding-top: 9px;
      }
      .num {
        font-size: 47px;
        line-height: 50px;
        font-weight: 500;
        color: #109a10;
        letter-spacing: -1.300px;
        margin: 8px 0 0 2px;
      }
      .row {
        display: flex;
        align-items: center;
        width: 239px;
        justify-content: space-between;
        font-size: 41px;
        line-height: 50px;
        color: #666;
        margin: 1px 0 0 34px;
      }
      .pct {
        font-size: 38.500px;
        color: #109a10;
        font-weight: 500;
        letter-spacing: 0.200px;
      }
      .item {
        display: flex;
        flex-direction: column;
        align-items: center;
        padding-top: 7px;
        font-size: 41px;
        line-height: 50px;
        color: #666;
      }
      .item span {
        margin-top: 12px;
      }
    `,
  ];
  private item(label: string, icon: unknown) {
    return html`<div class="item">
      <svg width="66" height="62" viewBox="0 0 66 62" fill="none" stroke="#666" stroke-width="2.800" stroke-linecap="round" stroke-linejoin="round">${icon}</svg>
      <span>${label}</span>
    </div>`;
  }
  render() {
    return html`<div class="bar">
      <div class="index">
        ${upTri(21, 7, "#777")}
        <div class="num">11128.67</div>
        <div class="row"><span>深证</span><span class="pct">-0.26%</span></div>
      </div>
      ${this.item(
        "交易",
        svg`<path d="M18 9.500A27.500 27.500 0 0 1 57 46M57 46l7-4M50.500 54.500A27.500 27.500 0 0 1 9 19M9 19l-7 3" />
          <path d="M24 19.500l9 10 9-10M33 29.500V47M23.500 30h20M23.500 39h20" stroke-linecap="butt" />`,
      )}
      ${this.item(
        "发帖",
        svg`<path d="M42 5.500H14q-7 0-7 7v38q0 7 7 7h38q7 0 7-7V21" stroke-linecap="butt" />
          <path d="M50 13.500L30 33.500l-4 7 7-4L53 16.500z" fill="#666" stroke-width="1" /><path d="M54.500 10.500l1.800-1.800" stroke-width="6.500" />`,
      )}
      ${this.item(
        "功能",
        svg`<rect x="8" y="6.500" width="22" height="22" rx="3" /><rect x="8" y="33.500" width="22" height="22" rx="3" /><rect x="35" y="33.500" width="22" height="22" rx="3" />
          <path d="M44.500 6.500q2-2 4 0l8.500 8.800q2 2 0 4l-8.500 8.700q-2 2-4 0L36 19.300q-2-2 0-4z" />`,
      )}
      ${this.item(
        "设自选",
        svg`<circle cx="33" cy="31" r="26.800" /><circle cx="21" cy="31" r="2.900" fill="#666" stroke="none" /><circle cx="33" cy="31" r="2.900" fill="#666" stroke="none" /><circle cx="45" cy="31" r="2.900" fill="#666" stroke="none" />`,
      )}
    </div>`;
  }
}

@customElement("app-root")
class AppRoot extends LitElement {
  static styles = [
    base,
    css`
      .page {
        width: 1084px;
        height: 2412px;
        background: #fff;
        overflow: hidden;
        line-height: 1.2;
      }
    `,
  ];
  render() {
    return html`<div class="page">
      <status-bar></status-bar>
      <title-bar></title-bar>
      <quote-panel></quote-panel>
      <period-tabs></period-tabs>
      <price-chart></price-chart>
      <macd-chart></macd-chart>
      <turnover-chart></turnover-chart>
      <bottom-bar></bottom-bar>
    </div>`;
  }
}
